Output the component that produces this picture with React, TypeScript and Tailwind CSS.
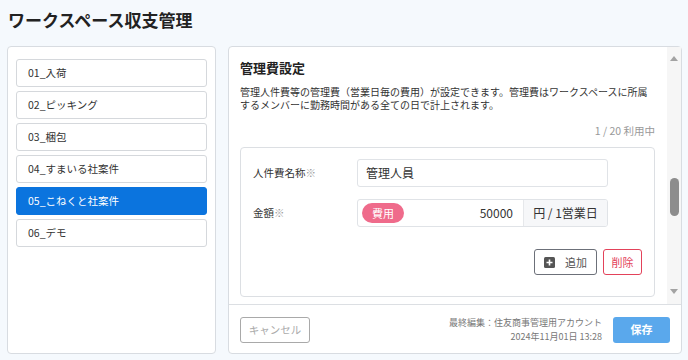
const projects = [
  "01_入荷",
  "02_ピッキング",
  "03_梱包",
  "04_すまいる社案件",
  "05_こねくと社案件",
  "06_デモ",
];

const selected = "05_こねくと社案件";

export default function App() {
  return (
    <div className="h-[360px] w-[688px] overflow-hidden bg-[#f5f9fd] pl-[7px] pr-[6px] font-['Noto_Sans_CJK_JP',sans-serif] text-[#333]">
      <h1 className="pl-px pt-[9px] text-[17px] font-bold leading-[22px] text-[#222]">
        ワークスペース収支管理
      </h1>

      <div className="mt-[15px] flex h-[308px] gap-3">
        {/* project list */}
        <aside className="flex w-[209px] flex-col gap-1 rounded border border-[#d8dce1] bg-white px-2 pt-3">
          {projects.map((name) => (
            <div
              key={name}
              className={
                name === selected
                  ? "flex h-[28px] items-center rounded-[3px] border border-[#0b74de] bg-[#0b74de] pl-[11px] text-[10.5px] text-white"
                  : "flex h-[28px] items-center rounded-[3px] border border-[#d5d8dc] bg-white pl-[11px] text-[10.5px] text-[#333]"
              }
            >
              {name}
            </div>
          ))}
        </aside>

        {/* settings panel */}
        <section className="flex flex-1 flex-col rounded border border-[#d8dce1] bg-white">
          <div className="flex h-[257px]">
            <div className="flex-1 overflow-hidden pl-[11px] pr-3 pt-3">
              <h2 className="text-[13px] font-bold leading-[18px] text-[#222]">管理費設定</h2>
              <p className="mt-2 whitespace-nowrap text-[10px] leading-[13px] text-[#333]">
                管理人件費等の管理費（営業日毎の費用）が設定できます。管理費はワークスペースに所属
                <br />
                するメンバーに勤務時間がある全ての日で計上されます。
              </p>
              <div className="mt-3 text-right text-[10.5px] leading-[16px] text-[#999]">1 / 20 利用中</div>

              <div className="mt-2 rounded border border-[#dcdfe3] px-3 pb-[21px] pt-[11px]">
                <div className="flex items-center">
                  <div className="w-[104px] text-[10.5px] text-[#333]">
                    人件費名称<span className="text-[#999]">※</span>
                  </div>
                  <div className="flex h-[28px] w-[251px] items-center rounded-[3px] border border-[#e0e3e7] pl-[8px] text-[12px] text-[#333]">
                    管理人員
                  </div>
                </div>

                <div className="mt-3 flex items-center">
                  <div className="w-[104px] text-[10.5px] text-[#333]">
                    金額<span className="text-[#999]">※</span>
                  </div>
                  <div className="flex h-[28px] w-[251px] overflow-hidden rounded-[3px] border border-[#e0e3e7]">
                    <div className="flex flex-1 items-center pl-1 pr-[10px]">
                      <span className="flex h-[20px] w-[42px] items-center justify-center rounded-full bg-[#ef6b8b] text-[11px] text-white">
                        費用
                      </span>
                      <span className="flex-1 text-right text-[12px] text-[#333]">50000</span>
                    </div>
                    <div className="flex w-[84px] items-center justify-center border-l border-[#e6e8eb] bg-[#f6f7f9] text-[12px] text-[#333]">
                      円 / 1営業日
                    </div>
                  </div>
                </div>

                <div className="mt-[22px] flex justify-end gap-[6px]">
                  <button className="flex h-[26px] w-[63px] items-center justify-center gap-[10px] rounded-[3px] border border-[#6c7079] text-[11px] text-[#555]">
                    <svg width="11" height="11" viewBox="0 0 11 11">
                      <rect width="11" height="11" rx="1.5" fill="#555" />
                      <path d="M5.5 2.5v6M2.5 5.5h6" stroke="#fff" strokeWidth="1.6" />
                    </svg>
                    追加
                  </button>
                  <button className="flex h-[26px] w-[39px] items-center justify-center rounded-[3px] border border-[#e3425a] text-[11px] text-[#e3425a]">
                    削除
                  </button>
                </div>
              </div>
            </div>

            {/* scrollbar */}
            <div className="flex w-[14px] flex-col items-center bg-[#f6f6f6]">
              <svg className="mt-[9px]" width="8" height="5" viewBox="0 0 8 5">
                <path d="M0 5L4 0L8 5Z" fill="#a3a3a3" />
              </svg>
              <div className="mt-[117px] h-[38px] w-[9px] rounded-full bg-[#8d8d8d]" />
              <svg className="mt-auto mb-[10px]" width="8" height="5" viewBox="0 0 8 5">
                <path d="M0 0L8 0L4 5Z" fill="#a3a3a3" />
              </svg>
            </div>
          </div>

          <footer className="flex h-[49px] items-center border-t border-[#dcdfe3] px-[11px] pt-px">
            <button className="flex h-[26px] w-[70px] items-center justify-center rounded-[3px] border border-[#a9a9a9] text-[10.5px] text-[#aaa]">
              キャンセル
            </button>
            <div className="ml-auto text-right text-[9px] leading-[14px] text-[#777]">
              <div>最終編集：住友商事管理用アカウント</div>
              <div>2024年11月01日 13:28</div>
            </div>
            <button className="ml-[11px] flex h-[26px] w-[57px] items-center justify-center rounded-[3px] bg-[#5aa8ec] text-[11px] font-bold text-white">
              保存
            </button>
          </footer>
        </section>
      </div>
    </div>
  );
}
